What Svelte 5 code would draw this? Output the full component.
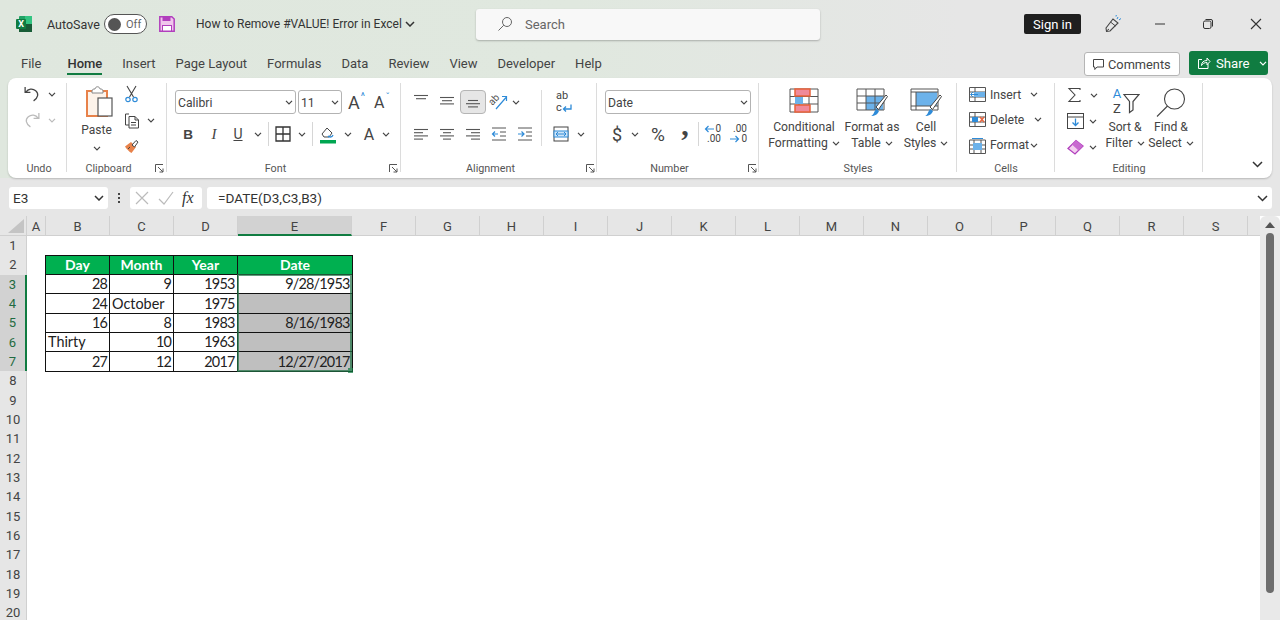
<script>
	const tabs = ['File', 'Home', 'Insert', 'Page Layout', 'Formulas', 'Data', 'Review', 'View', 'Developer', 'Help'];

	const columns = [
		{ name: 'A', width: 19 }, { name: 'B', width: 64 }, { name: 'C', width: 64 }, { name: 'D', width: 64 },
		{ name: 'E', width: 114, active: true }, { name: 'F', width: 64 }, { name: 'G', width: 64 }, { name: 'H', width: 64 },
		{ name: 'I', width: 64 }, { name: 'J', width: 64 }, { name: 'K', width: 64 }, { name: 'L', width: 64 },
		{ name: 'M', width: 64 }, { name: 'N', width: 64 }, { name: 'O', width: 64 }, { name: 'P', width: 64 },
		{ name: 'Q', width: 64 }, { name: 'R', width: 64 }, { name: 'S', width: 64 }
	];
	const rowNumbers = Array.from({ length: 20 }, (_, i) => i + 1);

	const rows = [
		{ day: '28', month: '9', year: '1953', date: '9/28/1953', err: false },
		{ day: '24', month: 'October', year: '1975', date: '', err: true },
		{ day: '16', month: '8', year: '1983', date: '8/16/1983', err: true },
		{ day: 'Thirty', month: '10', year: '1963', date: '', err: true },
		{ day: '27', month: '12', year: '2017', date: '12/27/2017', err: true }
	];
	const isText = (v) => isNaN(Number(v));

	// [x1, x2] of each line, 4 lines spaced evenly
	const alignLeft = [[1, 15], [1, 10], [1, 15], [1, 10]];
	const alignCenter = [[1, 15], [4, 12], [1, 15], [4, 12]];
	const alignRight = [[1, 15], [6, 15], [1, 15], [6, 15]];
</script>

{#snippet chev(color = '#444')}
	<svg class="chev" width="8" height="5" viewBox="0 0 8 5"><path d="M1 .8 4 3.900 7 .8" fill="none" stroke={color} stroke-width="1.200" /></svg>
{/snippet}

{#snippet launcher()}
	<svg class="launcher" width="9" height="9" viewBox="0 0 9 9"><path d="M.5 8V.5H8M3 3l5 5M8 4.500V8H4.500" fill="none" stroke="#555" stroke-width="1" /></svg>
{/snippet}

{#snippet lines(set, top = 3)}
	<svg width="16" height="16" viewBox="0 0 16 16">
		{#each set as l, i}
			<path d="M{l[0]} {top + i * 3.2 + .5}H{l[1]}" stroke="#555" stroke-width="1.100" />
		{/each}
	</svg>
{/snippet}

<div class="app">
	<header class="titlebar">
		<svg class="logo" width="16" height="16" viewBox="0 0 16 16">
			<rect x="3" y="0" width="13" height="16" rx="1" fill="#21a366" />
			<rect x="9" y="0" width="7" height="8" fill="#33c481" />
			<rect x="3" y="8" width="13" height="8" fill="#185c37" />
			<rect x="0" y="3" width="10" height="10" rx="1" fill="#107c41" />
			<text x="5" y="11" font-size="9" font-weight="700" text-anchor="middle" fill="#fff" font-family="Roboto, sans-serif">X</text>
		</svg>
		<span class="autosave">AutoSave</span>
		<span class="toggle"><i></i>Off</span>
		<svg class="save" width="16" height="16" viewBox="0 0 16 16">
			<path d="M.8.8h12L15.200 3v12.200H.8z" fill="#f0c6ec" stroke="#b13fbd" stroke-width="1.500" />
			<rect x="3.500" y="1" width="8" height="4" fill="#b13fbd" />
			<rect x="3.500" y="9.500" width="9" height="5.500" fill="#fff" stroke="#b13fbd" />
		</svg>
		<span class="doc-title">How to Remove #VALUE! Error in Excel</span>
		<svg class="doc-chev" width="10" height="6" viewBox="0 0 10 6"><path d="M1 1l4 4 4-4" fill="none" stroke="#333" stroke-width="1.500" /></svg>
		<div class="search">
			<svg width="16" height="16" viewBox="0 0 16 16"><circle cx="10" cy="6" r="4.500" fill="none" stroke="#666" /><path d="M6.800 9.200 1.500 14.500" stroke="#666" /></svg>
			<span>Search</span>
		</div>
		<button class="signin">Sign in</button>
		<svg class="pen" width="20" height="20" viewBox="0 0 20 20">
			<path d="M3 14 10 5l5 4-8 8-3.500.5z" fill="none" stroke="#444" stroke-width="1.100" />
			<path d="M3.500 17 6 15M7.500 8l5 4" stroke="#444" />
			<path d="M14 5l1-2M16 6l2-1.500M13 2.500l.3-1.500" stroke="#2e8bd8" />
		</svg>
		<div class="winbtns">
			<svg width="12" height="12" viewBox="0 0 12 12"><path d="M1 6h10" stroke="#333" /></svg>
			<svg width="12" height="12" viewBox="0 0 12 12"><rect x="1.500" y="3" width="7.500" height="7.500" rx="1.500" fill="none" stroke="#333" /><path d="M3.500 1.500h5.500a1.500 1.500 0 0 1 1.500 1.500v5.500" fill="none" stroke="#333" /></svg>
			<svg width="12" height="12" viewBox="0 0 12 12"><path d="M1 1l10 10M11 1 1 11" stroke="#333" stroke-width="1.100" /></svg>
		</div>
	</header>

	<nav class="tabbar">
		<ul class="tabs">
			{#each tabs as t}
				<li class:active={t === 'Home'}>{t}</li>
			{/each}
		</ul>
		<button class="comments">
			<svg width="13" height="13" viewBox="0 0 13 13"><path d="M1.500 1.500h10v7.500H5L2.800 11.500V9H1.500z" fill="none" stroke="#444" /></svg>
			Comments
		</button>
		<div class="share">
			<svg width="14" height="14" viewBox="0 0 14 14"><path d="M5 3.500H1.500v9h9.500V8M4.500 9.500c0-3 2-5 5.500-5V2l3 3.500-3 3.300V6.500c-2.500 0-4.500 1-5.500 3z" fill="none" stroke="#fff" /></svg>
			<span>Share</span>
			{@render chev('#fff')}
		</div>
	</nav>

	<section class="ribbon">
		<div class="grp g-undo">
			<div class="grp-body undo-body">
				<div class="u-row">
					<svg width="18" height="18" viewBox="0 0 17 17"><path d="M2 2v5h5M2.500 7C5 3.500 9 3 12 5.500s2.500 6.500-2 9.500" fill="none" stroke="#444" stroke-width="1.200" /></svg>
					{@render chev()}
				</div>
				<div class="u-row">
					<svg width="18" height="18" viewBox="0 0 17 17"><path d="M15 2v5h-5M14.500 7C12 3.500 8 3 5 5.500S2.500 12 7 15" fill="none" stroke="#bbb" stroke-width="1.200" /></svg>
					{@render chev('#bbb')}
				</div>
			</div>
			<div class="grp-label">Undo</div>
		</div>

		<div class="grp g-clip">
			<div class="grp-body clip-body">
				<div class="paste">
					<svg width="30" height="33" viewBox="0 0 30 33">
						<path d="M3 6h20v25H3z" fill="#fdf3ea" stroke="#e8824a" stroke-width="2" />
						<path d="M8 6c0-2 2-2 3-2 .5-3 4.500-3 5 0 1 0 3 0 3 2v2H8z" fill="#fff" stroke="#888" />
						<rect x="14" y="13" width="14" height="18" fill="#fff" stroke="#555" stroke-width="1.200" />
					</svg>
					<span>Paste</span>
					{@render chev()}
				</div>
				<div class="clip-tools">
					<div class="u-row">
						<svg width="15" height="18" viewBox="0 0 15 18"><path d="M3 1l6.500 11M12 1 5.500 12" stroke="#444" stroke-width="1.100" /><circle cx="4" cy="14.500" r="2.200" fill="none" stroke="#2e8bd8" stroke-width="1.200" /><circle cx="11" cy="14.500" r="2.200" fill="none" stroke="#2e8bd8" stroke-width="1.200" /></svg>
					</div>
					<div class="u-row">
						<svg width="16" height="17" viewBox="0 0 16 17"><path d="M5 2H1.500v11H5" fill="none" stroke="#444" /><path d="M5 4.500h6l3.500 3.500v8H5zM11 4.500V8h3.500M7 10.500h5M7 13h5" fill="#fff" stroke="#444" /></svg>
						{@render chev()}
					</div>
					<div class="u-row">
						<svg width="16" height="16" viewBox="0 0 16 16"><path d="M1 8.500 7 4l5 5-4.500 6c-2-1-5-4-6.500-6.500z" fill="#e8824a" /><path d="M4 11l2-2M8 7l4-4.500 2 1.500-3.500 5z" stroke="#444" fill="#fff" /></svg>
					</div>
				</div>
			</div>
			<div class="grp-label">Clipboard</div>
			{@render launcher()}
		</div>

		<div class="grp g-font">
			<div class="grp-body">
				<div class="row">
					<div class="select font-name"><span>Calibri</span>{@render chev()}</div>
					<div class="select font-size"><span>11</span>{@render chev()}</div>
					<span class="grow">A<sup>^</sup></span>
					<span class="shrink">A<sup>ˇ</sup></span>
				</div>
				<div class="row font-row">
					<span class="ico b">B</span>
					<span class="ico i">I</span>
					<span class="ico u">U</span>
					{@render chev()}
					<span class="vsep"></span>
					<svg width="16" height="16" viewBox="0 0 16 16"><path d="M1 1h14v14H1zM8 1v14M1 8h14" fill="none" stroke="#333" stroke-width="1.300" /></svg>
					{@render chev()}
					<span class="vsep"></span>
					<svg class="fill" width="18" height="19" viewBox="0 0 18 19"><path d="M3 9 8 3l5 5-3 4H5z" fill="none" stroke="#444" /><path d="M9 11c1 1 4 2 5-1" fill="none" stroke="#2e8bd8" stroke-width="1.300" /><rect x="1" y="15" width="16" height="3.500" fill="#00a651" /></svg>
					{@render chev()}
					<span class="ico font-color">A</span>
					{@render chev()}
				</div>
			</div>
			<div class="grp-label">Font</div>
			{@render launcher()}
		</div>

		<div class="grp g-align">
			<div class="grp-body align-body">
				<div class="align-grid">
					<div class="row tight">
						<span class="cell">{@render lines([[1, 15], [3, 13]], 1)}</span>
						<span class="cell">{@render lines([[1, 15], [3, 13], [1, 15]], 3)}</span>
						<span class="cell picked">{@render lines([[3, 13], [1, 15], [3, 13]], 6)}</span>
						<span class="cell orient">
							<svg width="24" height="22" viewBox="-3 -3 24 22">
								<text x="0" y="0" transform="translate(2.500 12) rotate(-48)" font-size="10" fill="#555" font-family="Roboto, sans-serif">ab</text>
								<path d="M6 15 16 3.500M12 2.500h4.500V7" fill="none" stroke="#2e8bd8" stroke-width="1.200" />
							</svg>
						</span>
						{@render chev()}
					</div>
					<div class="row tight">
						<span class="cell">{@render lines(alignLeft)}</span>
						<span class="cell">{@render lines(alignCenter)}</span>
						<span class="cell">{@render lines(alignRight)}</span>
						<span class="cell">
							<svg width="16" height="16" viewBox="0 0 16 16"><path d="M1 2h14M9 6h6M9 10h6M1 14h14" stroke="#555" /><path d="M7 8H1.500M4 5.500 1.500 8 4 10.500" fill="none" stroke="#2e8bd8" stroke-width="1.200" /></svg>
						</span>
						<span class="cell">
							<svg width="16" height="16" viewBox="0 0 16 16"><path d="M1 2h14M9 6h6M9 10h6M1 14h14" stroke="#555" /><path d="M1 8h6M4.500 5.500 7 8l-2.500 2.500" fill="none" stroke="#2e8bd8" stroke-width="1.200" /></svg>
						</span>
					</div>
				</div>
				<div class="align-right">
					<div class="row tight wrap">
						<div class="wrap-ico">
							<span>ab</span>
							<span class="wrap-c">c<svg width="10" height="9" viewBox="0 0 10 9"><path d="M9 .5V5H1.500M4 2.500 1.500 5 4 7.500" fill="none" stroke="#2e8bd8" stroke-width="1.300" /></svg></span>
						</div>
					</div>
					<div class="row tight merge">
						<svg width="16" height="16" viewBox="0 0 16 16"><rect x="1" y="1" width="14" height="14" fill="none" stroke="#444" /><rect x="1" y="5" width="14" height="6" fill="#cfe5f7" stroke="#2e8bd8" /><path d="M3 8h10M5 6l-2 2 2 2M11 6l2 2-2 2" fill="none" stroke="#2e8bd8" /></svg>
						{@render chev()}
					</div>
				</div>
			</div>
			<div class="grp-label">Alignment</div>
			{@render launcher()}
		</div>

		<div class="grp g-number">
			<div class="grp-body">
				<div class="row">
					<div class="select num-format"><span>Date</span>{@render chev()}</div>
				</div>
				<div class="row num-row">
					<span class="ico dollar">$</span>
					{@render chev()}
					<span class="ico percent">%</span>
					<span class="ico comma">,</span>
					<span class="vsep"></span>
					<div class="dec">
						<span class="dec-line">
							<svg width="10" height="8" viewBox="0 0 10 8"><path d="M10 4H1.500M4.500 1 1.500 4l3 3" fill="none" stroke="#2e8bd8" stroke-width="1.200" /></svg>
							<span>0</span>
						</span>
						<span class="dec-line">.00</span>
					</div>
					<div class="dec">
						<span class="dec-line">.00</span>
						<span class="dec-line">
							<svg width="10" height="8" viewBox="0 0 10 8"><path d="M0 4h8.500M5.500 1l3 3-3 3" fill="none" stroke="#2e8bd8" stroke-width="1.200" /></svg>
							<span>0</span>
						</span>
					</div>
				</div>
			</div>
			<div class="grp-label">Number</div>
			{@render launcher()}
		</div>

		<div class="grp g-styles">
			<div class="grp-body styles-body">
				<div class="big cf">
					<div class="big-ico">
						<svg width="30" height="25" viewBox="0 0 30 25">
							<path d="M1 1h28v23H1zM1 8.500h28M1 16h28M10 1v23M20 1v23" fill="none" stroke="#555" />
							<rect x="6" y="1" width="15" height="7" fill="#f08a9a" stroke="#e8623a" stroke-width="1.500" />
							<rect x="6" y="9" width="8" height="7" fill="#6cb2ea" />
							<rect x="6" y="17" width="15" height="7" fill="#f08a9a" stroke="#e8623a" stroke-width="1.500" />
						</svg>
					</div>
					<span>Conditional</span>
					<span>Formatting {@render chev()}</span>
				</div>
				<div class="big fat">
					<div class="big-ico">
						<svg width="32" height="29" viewBox="0 0 32 29">
							<rect x="10" y="8" width="17" height="14" fill="#6cb2ea" />
							<path d="M1 1h27v21H1zM1 8h27M1 15h27M10 1v21M19 1v21" fill="none" stroke="#555" />
							<path d="M20 19 30 7l1.500 1.500-9 13z" fill="#fff" stroke="#444" />
							<path d="M15 28c2 0 3-4 5-7l3 2c-1 3-4 5-8 5z" fill="#2e8bd8" />
						</svg>
					</div>
					<span>Format as</span>
					<span>Table {@render chev()}</span>
				</div>
				<div class="big cs">
					<div class="big-ico">
						<svg width="32" height="29" viewBox="0 0 32 29">
							<rect x="6" y="4" width="21" height="14" fill="#6cb2ea" />
							<path d="M1 1h27v21H1zM1 4h27M6 4v18M1 18h27" fill="none" stroke="#555" />
							<path d="M20 19 30 7l1.500 1.500-9 13z" fill="#fff" stroke="#444" />
							<path d="M15 28c2 0 3-4 5-7l3 2c-1 3-4 5-8 5z" fill="#2e8bd8" />
						</svg>
					</div>
					<span>Cell</span>
					<span>Styles {@render chev()}</span>
				</div>
			</div>
			<div class="grp-label">Styles</div>
		</div>

		<div class="grp g-cells">
			<div class="grp-body cells-body">
				<div class="u-row cell-row">
					<svg width="17" height="15" viewBox="0 0 17 15"><path d="M.5.500h16v14H.5zM.5 5h16M.5 10h16M6 .5v14" fill="none" stroke="#555" /><rect x="5" y="5" width="11" height="5" fill="#6cb2ea" /><path d="M9 7.500H2M4 5 1.500 7.500 4 10" fill="none" stroke="#2e8bd8" /></svg>
					<span class="cell-name">Insert</span>
					{@render chev()}
				</div>
				<div class="u-row cell-row">
					<svg width="17" height="15" viewBox="0 0 17 15"><path d="M.5.500h16v14H.5zM.5 5h16M.5 10h16M6 .5v14" fill="none" stroke="#555" /><rect x="3" y="5" width="6" height="5" fill="#2e8bd8" /><path d="M11 5l4 5M15 5l-4 5" stroke="#e8623a" stroke-width="1.300" /></svg>
					<span class="cell-name del">Delete</span>
					{@render chev()}
				</div>
				<div class="u-row cell-row">
					<svg width="17" height="17" viewBox="0 0 17 17"><path d="M.5 3h16v13.500H.5zM.5 8h16M.5 12h16M5 3v13.500M12 3v13.500" fill="none" stroke="#555" /><rect x="4" y="6" width="9" height="7" fill="#6cb2ea" /><path d="M3 1.500h11" stroke="#2e8bd8" /></svg>
					<span class="cell-name fmt">Format</span>
					{@render chev()}
				</div>
			</div>
			<div class="grp-label">Cells</div>
		</div>

		<div class="grp g-editing">
			<div class="grp-body edit-body">
				<div class="edit-col">
					<div class="u-row edit-row sum">
						<svg width="16" height="16" viewBox="0 0 16 16"><path d="M13 3V1.500H2l6 6.500-6 6.500h11V13" fill="none" stroke="#444" stroke-width="1.100" /></svg>
						{@render chev()}
					</div>
					<div class="u-row edit-row">
						<svg width="17" height="16" viewBox="0 0 17 16"><rect x=".5" y=".5" width="16" height="15" fill="none" stroke="#444" /><path d="M.5 4h16" stroke="#444" /><path d="M8.500 5.500v7M5.500 9.500l3 3 3-3" fill="none" stroke="#2e8bd8" stroke-width="1.300" /></svg>
						{@render chev()}
					</div>
					<div class="u-row edit-row">
						<svg width="17" height="16" viewBox="0 0 17 16"><path d="M1 9.500 9 1.500l7 5.500-8 8z" fill="#f3d0ef" stroke="#b13fbd" stroke-width="1.300" /><path d="M5 5.500l6.500 6L16 7 9 1.500z" fill="#c86ad0" /></svg>
						{@render chev()}
					</div>
				</div>
				<div class="big sort">
					<div class="sort-ico">
						<svg width="30" height="34" viewBox="0 0 30 34">
							<text x="7" y="12.500" font-size="13" text-anchor="middle" fill="#2e8bd8" font-family="Roboto, sans-serif">A</text>
							<text x="7" y="28" font-size="13" text-anchor="middle" fill="#444" font-family="Roboto, sans-serif">Z</text>
							<path d="M14 9.500h15l-6 7v8.500l-3.500 2.500v-11z" fill="none" stroke="#444" stroke-width="1.200" />
						</svg>
					</div>
					<span>Sort &amp;</span>
					<span>Filter {@render chev()}</span>
				</div>
				<div class="big find">
					<div class="big-ico">
						<svg width="30" height="30" viewBox="0 0 30 30"><circle cx="18.500" cy="11" r="10" fill="none" stroke="#444" stroke-width="1.100" /><path d="M11.500 18 1 28.500" stroke="#444" stroke-width="1.100" /></svg>
					</div>
					<span>Find &amp;</span>
					<span>Select {@render chev()}</span>
				</div>
			</div>
			<div class="grp-label">Editing</div>
		</div>

		<svg class="collapse" width="11" height="7" viewBox="0 0 11 7"><path d="M1 1l4.500 4.500L10 1" fill="none" stroke="#333" stroke-width="1.500" /></svg>
	</section>

	<div class="formula-bar">
		<div class="namebox">
			<span>E3</span>
			<svg width="10" height="6" viewBox="0 0 10 6"><path d="M1 1l4 4 4-4" fill="none" stroke="#333" stroke-width="1.500" /></svg>
		</div>
		<div class="dots"><i></i><i></i><i></i></div>
		<div class="fx-box">
			<svg width="14" height="14" viewBox="0 0 14 14"><path d="M1 1l12 12M13 1 1 13" stroke="#bbb" stroke-width="1.200" /></svg>
			<svg width="16" height="14" viewBox="0 0 16 14"><path d="M1 8l5 5L15 1" fill="none" stroke="#bbb" stroke-width="1.200" /></svg>
			<span class="fx">fx</span>
		</div>
		<div class="formula">
			<span>=DATE(D3,C3,B3)</span>
			<svg width="11" height="7" viewBox="0 0 11 7"><path d="M1 1l4.500 4.500L10 1" fill="none" stroke="#333" stroke-width="1.500" /></svg>
		</div>
	</div>

	<main class="sheet">
		<div class="sheet-main">
			<div class="col-heads">
				<div class="corner"><svg width="16" height="14" viewBox="0 0 16 14"><path d="M16 0v14H0z" fill="#c4c4c4" /></svg></div>
				{#each columns as c}
					<div class="col-head" class:active={c.active} style="width:{c.width}px">{c.name}</div>
				{/each}
				<div class="col-head last"></div>
			</div>
			<div class="grid-area">
				<div class="row-heads">
					{#each rowNumbers as n}
						<div class="row-head" class:active={n >= 3 && n <= 7}>{n}</div>
					{/each}
				</div>
				<div class="cells">
					<div class="table-wrap">
						<table>
							<thead>
								<tr><th class="cw">Day</th><th class="cw">Month</th><th class="cw">Year</th><th class="dw">Date</th></tr>
							</thead>
							<tbody>
								{#each rows as r}
									<tr>
										<td class:txt={isText(r.day)}>{r.day}</td>
										<td class:txt={isText(r.month)}>{r.month}</td>
										<td>{r.year}</td>
										<td class:err={r.err}>{r.date}</td>
									</tr>
								{/each}
							</tbody>
						</table>
						<div class="selection"><i></i></div>
					</div>
				</div>
			</div>
		</div>
		<aside class="scrollbar">
			<svg width="10" height="6" viewBox="0 0 10 6"><path d="M5 0l5 6H0z" fill="#555" /></svg>
			<div class="thumb"></div>
		</aside>
	</main>
</div>

<style>
	:global(body) {
		margin: 0;
		background: #fff;
	}

	.app {
		width: 1280px;
		height: 620px;
		overflow: hidden;
		display: flex;
		flex-direction: column;
		font-family: Roboto, 'Open Sans', sans-serif;
		font-size: 13px;
		color: #444;
		background: linear-gradient(90deg, #dfe7de 0%, #e0e8df 45%, #e6e6e6 75%);
	}

	button {
		font: inherit;
	}

	svg {
		flex: none;
		display: block;
	}

	/* title bar */
	.titlebar {
		height: 48px;
		flex: none;
		display: flex;
		align-items: center;
		padding-left: 16px;
		box-sizing: border-box;
	}

	.autosave {
		margin-left: 15px;
		width: 57px;
		font-size: 12.500px;
		color: #333;
	}

	.toggle {
		width: 43px;
		height: 20px;
		box-sizing: border-box;
		border: 1px solid #555;
		border-radius: 10px;
		background: #fff;
		display: flex;
		align-items: center;
		gap: 5px;
		padding-left: 3px;
		font-size: 11px;
		color: #666;
	}

	.toggle i {
		width: 13px;
		height: 13px;
		border-radius: 50%;
		background: #555;
	}

	.save {
		margin-left: 12px;
	}

	.doc-title {
		margin-left: 21px;
		width: 204px;
		font-size: 12px;
		white-space: nowrap;
		color: #333;
	}

	.doc-chev {
		margin-left: 5px;
	}

	.search {
		margin-left: 61px;
		width: 344px;
		height: 31px;
		box-sizing: border-box;
		background: #f8f8f8;
		border-radius: 3px;
		box-shadow: 0 1px 2px rgba(0, 0, 0, 0.25);
		display: flex;
		align-items: center;
		gap: 12px;
		padding-left: 21px;
		font-size: 13px;
		color: #666;
	}

	.signin {
		margin-left: 204px;
		width: 57px;
		height: 20px;
		padding: 0;
		border: 0;
		border-radius: 2px;
		background: #1f1f1f;
		color: #fff;
		font-size: 13px;
	}

	.pen {
		margin-left: 22px;
	}

	.winbtns {
		margin-left: 31px;
		display: flex;
		gap: 36px;
	}

	/* tabs */
	.tabbar {
		height: 30px;
		flex: none;
		display: flex;
		align-items: flex-start;
		position: relative;
	}

	.tabs {
		list-style: none;
		margin: 0;
		padding: 0 0 0 21px;
		display: flex;
		gap: 20px;
		flex: 1;
		font-size: 13px;
		color: #444;
	}

	.tabs li {
		height: 25px;
		line-height: 31px;
		white-space: nowrap;
		position: relative;
	}

	.tabs li:first-child {
		margin-right: 6px;
	}

	.tabs li.active {
		font-weight: 500;
		color: #333;
		border-bottom: 2px solid #107c41;
	}

	.comments {
		margin: 4px 9px 0 0;
		width: 96px;
		height: 24px;
		box-sizing: border-box;
		background: #fff;
		border: 1px solid #b5b5b5;
		border-radius: 3px;
		display: flex;
		align-items: center;
		gap: 3px;
		padding: 0 0 0 7px;
		font-size: 12.800px;
		color: #444;
	}

	.share {
		margin: 3px 12px 0 0;
		width: 79px;
		height: 24px;
		box-sizing: border-box;
		background: #107c41;
		border-radius: 3px;
		display: flex;
		align-items: center;
		gap: 5px;
		padding-left: 8px;
		color: #fff;
		font-size: 13.200px;
	}

	.share :global(.chev) {
		margin-left: 4px;
	}

	/* ribbon */
	.ribbon {
		height: 100px;
		flex: none;
		margin: 0 8px;
		background: #fff;
		border-radius: 8px;
		box-shadow: 0 1px 2px rgba(0, 0, 0, 0.2);
		display: flex;
		position: relative;
	}

	.grp {
		position: relative;
		box-sizing: border-box;
		display: flex;
		flex-direction: column;
		flex: none;
	}

	.grp::after {
		content: '';
		position: absolute;
		right: 0;
		top: 5px;
		bottom: 6px;
		width: 1px;
		background: #dcdcdc;
	}

	.g-undo { width: 59px; }
	.g-clip { width: 100px; }
	.g-font { width: 234px; }
	.g-align { width: 196px; }
	.g-number { width: 162px; }
	.g-styles { width: 198px; }
	.g-cells { width: 98px; }
	.g-editing { width: 148px; }

	.grp-body {
		flex: 1;
		min-height: 0;
		padding-top: 12px;
		display: flex;
		flex-direction: column;
		gap: 8px;
	}

	.grp-label {
		flex: none;
		height: 20px;
		line-height: 22px;
		text-align: center;
		font-size: 10.800px;
		color: #555;
	}

	.g-undo .grp-label { padding-left: 3px; }
	.g-clip .grp-label,
	.g-font .grp-label,
	.g-align .grp-label,
	.g-number .grp-label { padding-right: 17px; }

	.launcher {
		position: absolute;
		right: 3px;
		bottom: 5px;
	}

	.g-align .launcher,
	.g-number .launcher { right: 2px; }

	.u-row {
		display: flex;
		align-items: center;
		height: 26px;
	}

	.undo-body {
		padding: 3px 0 0 15px;
		gap: 0;
	}

	.undo-body :global(.chev) {
		margin-left: 7px;
	}

	.clip-body {
		flex-direction: row;
		padding: 3px 0 0 15px;
		gap: 0;
	}

	.paste {
		width: 33px;
		display: flex;
		flex-direction: column;
		align-items: center;
		padding-top: 4px;
		font-size: 12px;
	}

	.paste span {
		margin: 3px 4px 0 0;
		line-height: 18px;
	}

	.paste :global(.chev) {
		margin: 7px 4px 0 0;
	}

	.clip-tools {
		margin-left: 6px;
	}

	.clip-tools .u-row {
		gap: 7px;
		padding-left: 3px;
	}

	.row {
		display: flex;
		align-items: center;
		height: 24px;
		padding-left: 8px;
	}

	.select {
		height: 24px;
		box-sizing: border-box;
		border: 1px solid #b3b3b3;
		border-radius: 3px;
		display: flex;
		align-items: center;
		justify-content: space-between;
		padding: 1px 2px 0;
		font-size: 12.200px;
		color: #444;
	}

	.font-name { width: 121px; }
	.font-size { width: 44px; margin-left: 2px; }

	.grow,
	.shrink {
		color: #444;
		display: flex;
	}

	.grow { margin-left: 6px; font-size: 18px; }
	.shrink { margin-left: 9px; font-size: 16px; }

	sup {
		font-size: 10px;
		color: #2e8bd8;
		line-height: 10px;
		margin-left: 1px;
	}

	.font-row {
		padding-left: 16px;
	}

	.ico {
		color: #444;
		text-align: center;
	}

	.b { width: 10px; font-weight: 700; font-size: 13.500px; font-family: 'Liberation Sans', sans-serif; }
	.i { width: 10px; margin-left: 16px; font-style: italic; font-size: 15px; font-family: 'Liberation Serif', serif; }
	.u { width: 12px; margin-left: 13px; font-size: 14px; text-decoration: underline; }

	.u + :global(.chev) { margin-left: 10px; }

	.vsep {
		width: 1px;
		height: 24px;
		background: #d6d6d6;
	}

	.font-row .vsep { margin: 0 6px 0 6px; }
	.font-row > svg:not(.chev) + :global(.chev) { margin-left: 7px; }
	.font-row > .fill + :global(.chev) { margin-left: 3px; }
	.font-color { margin-left: 11px; width: 12px; font-size: 16px; }
	.font-color + :global(.chev) { margin-left: 7px; }

	.align-body {
		flex-direction: row;
		gap: 0;
	}

	.row.tight {
		padding-left: 0;
		height: 24px;
	}

	.align-grid {
		display: flex;
		flex-direction: column;
		gap: 8px;
		padding-left: 7px;
		width: 141px;
		box-sizing: border-box;
		border-right: 1px solid #dcdcdc;
		height: 56px;
	}

	.cell {
		width: 26px;
		height: 24px;
		box-sizing: border-box;
		display: flex;
		align-items: center;
		justify-content: center;
		flex: none;
	}

	.cell.picked {
		background: #e6e6e6;
		border: 1px solid #b5b5b5;
		border-radius: 4px;
	}

	.align-right {
		display: flex;
		flex-direction: column;
		gap: 8px;
		padding-left: 11px;
	}

	.wrap-ico {
		display: flex;
		flex-direction: column;
		font-size: 11px;
		line-height: 12px;
		color: #444;
		padding-left: 3px;
	}

	.wrap-c {
		display: flex;
		align-items: center;
		height: 12px;
	}

	.merge { gap: 8px; }

	.num-format {
		width: 146px;
	}

	.num-row {
		padding-left: 15px;
	}

	.dollar { font-size: 18px; width: 10px; }
	.dollar + :global(.chev) { margin-left: 9px; }
	.percent { font-size: 19px; margin-left: 9px; width: 20px; }
	.comma {
		font-family: 'Liberation Serif', serif;
		font-size: 30px;
		font-weight: 700;
		margin-left: 12px;
		width: 10px;
		line-height: 24px;
		transform: translateY(-9px);
	}
	.num-row .vsep { margin-left: 8px; }

	.dec {
		display: flex;
		flex-direction: column;
		align-items: flex-end;
		margin-left: 0;
		font-size: 10px;
		line-height: 10px;
		width: 22px;
	}

	.dec + .dec { margin-left: 4px; }

	.dec-line {
		display: flex;
		align-items: center;
		gap: 1px;
		height: 10px;
	}

	.styles-body,
	.edit-body {
		flex-direction: row;
		gap: 0;
		padding-top: 7px;
	}

	.styles-body {
		padding-left: 4px;
	}

	.big {
		display: flex;
		flex-direction: column;
		align-items: center;
		font-size: 12.200px;
		line-height: 16px;
		white-space: nowrap;
		color: #444;
		flex: none;
	}

	.big span {
		display: flex;
		align-items: center;
		gap: 4px;
	}

	.big-ico {
		height: 34px;
		display: flex;
		align-items: flex-start;
		padding-top: 3px;
		box-sizing: border-box;
	}

	.sort-ico {
		height: 34px;
	}

	.cf { width: 82px; }
	.fat { width: 54px; }
	.cs { width: 54px; }
	.sort { width: 46px; }
	.find { width: 46px; }

	.cells-body {
		padding: 4px 0 0 12px;
		gap: 0;
	}

	.cell-name {
		margin-left: 4px;
		width: 40px;
		font-size: 12.200px;
	}

	.cell-name.del { width: 44px; }

	.edit-col {
		width: 47px;
		padding: 0 0 0 12px;
		box-sizing: border-box;
		margin-top: -3px;
	}

	.edit-row {
		gap: 5px;
	}

	.edit-row.sum {
		gap: 7px;
	}

	.collapse {
		position: absolute;
		right: 9px;
		bottom: 10px;
	}

	/* formula bar */
	.formula-bar {
		height: 38px;
		flex: none;
		background: #e6e6e6;
		display: flex;
		align-items: center;
		padding: 2px 8px 0 9px;
		box-sizing: border-box;
		font-size: 13.600px;
		color: #333;
	}

	.namebox,
	.fx-box,
	.formula {
		height: 22px;
		background: #fff;
		border-radius: 3px;
		display: flex;
		align-items: center;
		box-sizing: border-box;
	}

	.namebox {
		width: 99px;
		justify-content: space-between;
		padding: 0 4px;
	}

	.dots {
		width: 22px;
		display: flex;
		flex-direction: column;
		align-items: center;
		gap: 2px;
	}

	.dots i {
		width: 2px;
		height: 2px;
		background: #444;
	}

	.fx-box {
		width: 72px;
		gap: 9px;
		padding-left: 5px;
	}

	.fx {
		font-family: 'Liberation Serif', serif;
		font-style: italic;
		font-size: 16px;
		color: #333;
		margin-left: -1px;
	}

	.formula {
		flex: 1;
		margin-left: 5px;
		justify-content: space-between;
		padding: 0 4px 0 11px;
	}

	/* grid */
	.sheet {
		flex: 1;
		min-height: 0;
		display: flex;
		background: #fff;
	}

	.sheet-main {
		width: 1260px;
		overflow: hidden;
		flex: none;
	}

	.col-heads {
		height: 19px;
		display: flex;
		background: #e6e6e6;
		border-bottom: 1px solid #d0d0d0;
	}

	.corner {
		width: 27px;
		flex: none;
		box-sizing: border-box;
		border-right: 1px solid #d0d0d0;
		display: flex;
		justify-content: flex-end;
		align-items: flex-end;
		padding: 0 2px 2px 0;
	}

	.col-head {
		flex: none;
		box-sizing: border-box;
		border-right: 1px solid #d0d0d0;
		text-align: center;
		line-height: 22px;
		font-size: 13px;
		color: #444;
	}

	.col-head.active {
		background: #d2d2d2;
		border-bottom: 2px solid #107c41;
		height: 20px;
	}

	.col-head.last {
		flex: 1;
		border-right: 0;
	}

	.grid-area {
		display: flex;
	}

	.row-heads {
		width: 27px;
		flex: none;
		background: #e6e6e6;
	}

	.row-head {
		height: 19.330px;
		line-height: 19px;
		box-sizing: border-box;
		border-right: 1px solid #d0d0d0;
		text-align: center;
		font-size: 13px;
		color: #444;
	}

	.row-head.active {
		background: #d2d2d2;
		border-right: 2px solid #107c41;
		color: #1f6b41;
	}

	.cells {
		padding: 18.800px 0 0 18px;
	}

	.table-wrap {
		position: relative;
		width: 307px;
	}

	table {
		border-collapse: collapse;
		table-layout: fixed;
		width: 307px;
		font-family: Lato, 'Open Sans', sans-serif;
		font-size: 14.400px;
		color: #222;
	}

	th,
	td {
		border: 1px solid #111;
		padding: 0 2px;
		height: 19.330px;
		line-height: 18px;
		box-sizing: border-box;
		text-align: right;
		overflow: hidden;
		white-space: nowrap;
	}

	td:not(.txt) {
		letter-spacing: -0.800px;
	}

	td:nth-child(n + 3) {
		padding-right: 2.500px;
	}

	th {
		background: #00b050;
		color: #fff;
		text-align: center;
		font-weight: 700;
		font-size: 14px;
	}

	th.cw { width: 64px; }
	th.dw { width: 115px; }

	td.txt {
		text-align: left;
	}

	td.err {
		background: #bfbfbf;
	}

	.selection {
		position: absolute;
		left: 192px;
		top: 19.500px;
		width: 115px;
		height: 97.500px;
		box-sizing: border-box;
		border: 2px solid #217346;
		opacity: 0.7;
		pointer-events: none;
	}

	.selection i {
		position: absolute;
		right: -3px;
		bottom: -3px;
		width: 5px;
		height: 5px;
		background: #107c41;
	}

	.scrollbar {
		width: 20px;
		flex: none;
		background: #e9e9e9;
		display: flex;
		flex-direction: column;
		align-items: center;
		padding-top: 6px;
		box-sizing: border-box;
		border-radius: 6px 6px 0 0;
	}

	.thumb {
		margin-top: 5px;
		width: 8px;
		height: 360px;
		background: #6d6d6d;
		border-radius: 4px;
	}
</style>
